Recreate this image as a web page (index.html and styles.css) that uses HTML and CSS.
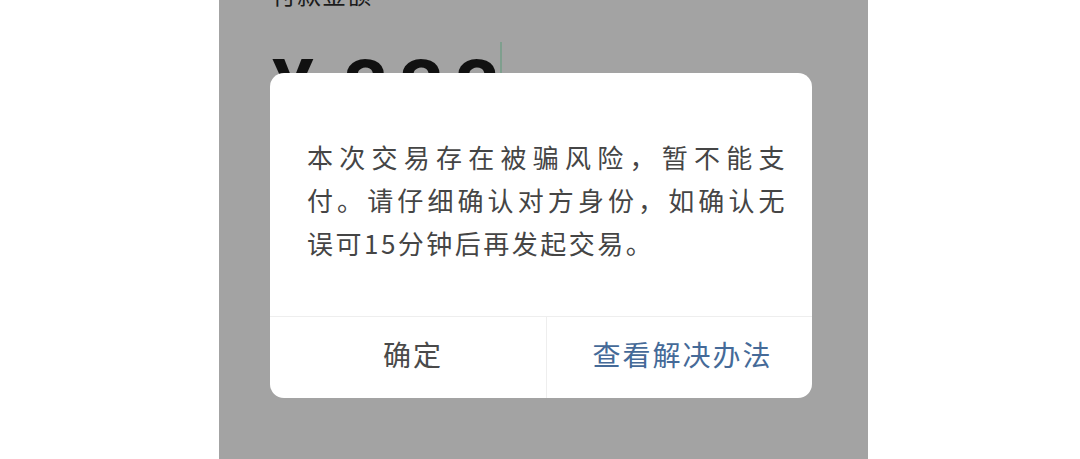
FILE: index.html
```html
<!DOCTYPE html>
<html lang="zh-CN">
<head>
<meta charset="utf-8">
<title>支付提示</title>
<link rel="stylesheet" href="styles.css">
</head>
<body>
  <div class="page">
    <div class="panel">
      <div class="label">付款金额</div>
      <div class="amount">
        <span class="yen">¥</span><span class="digits">333</span><span class="cursor"></span>
      </div>
      <div class="dialog">
        <div class="message">本次交易存在被骗风险，暂不能支付。请仔细确认对方身份，如确认无误可15分钟后再发起交易。</div>
        <div class="actions">
          <div class="btn btn-ok">确定</div>
          <div class="btn btn-link">查看解决办法</div>
        </div>
      </div>
    </div>
  </div>
</body>
</html>
```
FILE: styles.css
```css
* { box-sizing: border-box; }
html, body { margin: 0; padding: 0; background: #ffffff; }
body { font-family: "Noto Sans CJK SC", "Noto Sans", sans-serif; }
.page { width: 1080px; height: 459px; overflow: hidden; display: flex; }
.panel {
  margin-left: 219px;
  width: 649px;
  height: 459px;
  background: #a3a3a3;
  position: relative;
  overflow: hidden;
  padding-left: 53px;
}
.label {
  margin-top: -18px;
  font-size: 24px;
  line-height: 24px;
  color: #1c1c1c;
  letter-spacing: 1px;
}
.amount {
  margin-top: 44px;
  display: flex;
  align-items: flex-start;
  font-family: Roboto, "Liberation Sans", sans-serif;
  font-weight: 700;
  font-size: 78px;
  line-height: 1;
  color: #111111;
}
.yen { margin-right: 30px; }
.digits { letter-spacing: 11px; }
.cursor {
  width: 2px;
  height: 60px;
  margin-top: -8px;
  margin-left: -11px;
  background: #7f9f8e;
}
.dialog {
  position: absolute;
  left: 51px;
  top: 73px;
  width: 542px;
  height: 325px;
  background: #ffffff;
  border-radius: 14px;
  display: flex;
  flex-direction: column;
}
.message {
  flex: 1;
  padding: 62px 0 0 37px;
  width: 517px;
  font-size: 26px;
  line-height: 43px;
  letter-spacing: 2.5px;
  color: #454545;
  text-align: justify;
}
.actions {
  height: 82px;
  border-top: 1px solid #eeeeee;
  display: grid;
  grid-template-columns: 277px 1fr;
}
.btn {
  display: flex;
  align-items: center;
  justify-content: center;
  font-size: 28px;
  letter-spacing: 2px;
  padding-bottom: 8px;
}
.btn-ok { color: #4a4a4a; border-right: 1px solid #eeeeee; padding-left: 10px; }
.btn-link { color: #456a98; padding-left: 6px; }
```
